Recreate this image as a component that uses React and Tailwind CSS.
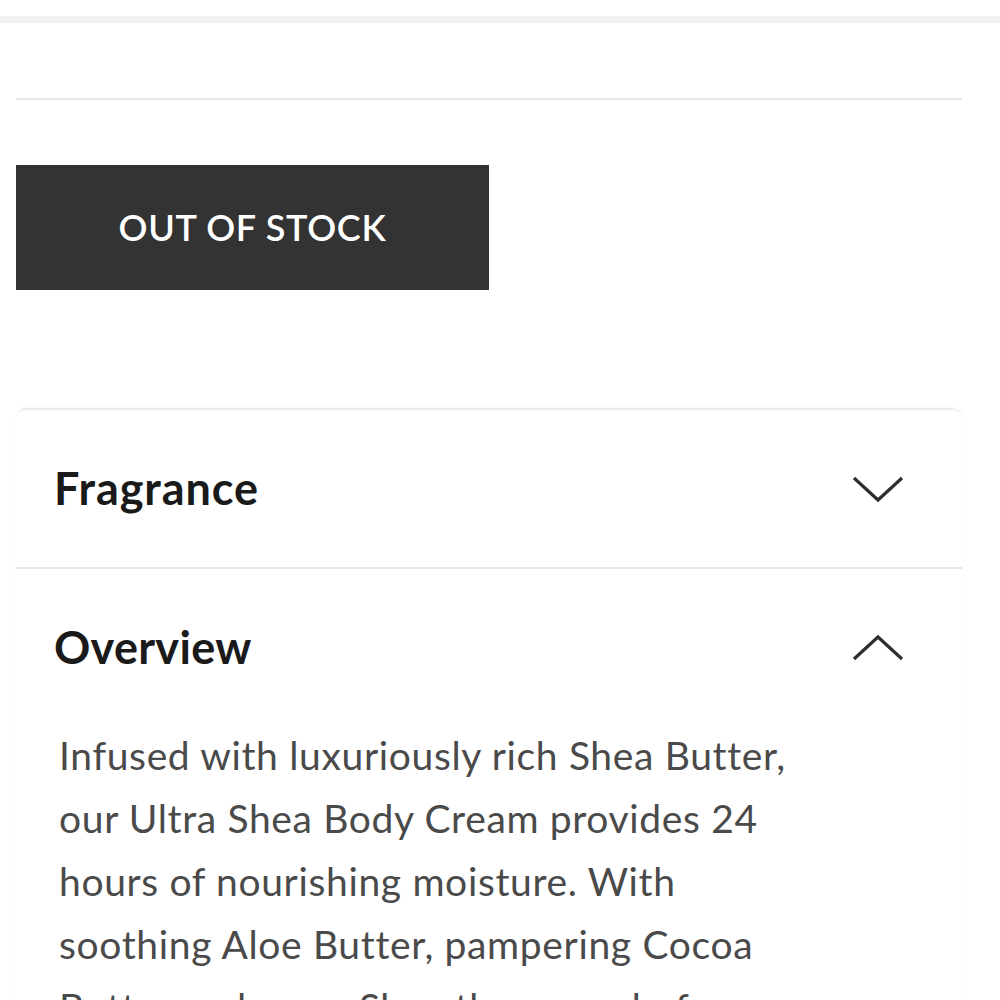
import React from "react";

function Chevron({ up }) {
  return (
    <svg width="52" height="28" viewBox="0 0 52 28" className="shrink-0">
      <polyline
        points={up ? "2,25 26,3 50,25" : "2,3 26,25 50,3"}
        fill="none"
        stroke="#2e2e2e"
        strokeWidth="3.2"
      />
    </svg>
  );
}

export default function App() {
  return (
    <div className="w-[1000px] h-[1000px] overflow-hidden bg-white" style={{ fontFamily: "Lato, 'Noto Sans', sans-serif" }}>
      <div className="h-[16px]" />
      <div className="h-[7px] bg-[#f2f2f2]" />
      <div className="px-[16px] mr-[22px]">
        <div className="mt-[75px] h-[2px] bg-[#e6e6e6]" />
        <div className="mt-[65px] w-[473px] h-[125px] bg-[#333333] flex items-center justify-center pb-[2px] text-white text-[36px] font-semibold tracking-[0.7px]">
          OUT OF STOCK
        </div>
        <div className="mt-[118px] rounded-t-[10px] border-t-2 border-[#ebebeb] shadow-[0_-1px_2px_rgba(0,0,0,0.03)]">
          <div className="h-[157px] flex items-center justify-between pl-[38px] pr-[58px]">
            <span className="text-[45px] font-bold text-[#1a1a1a] tracking-[0.9px]">Fragrance</span>
            <Chevron />
          </div>
          <div className="h-[2px] bg-[#e6e6e6]" />
          <div className="h-[158px] flex items-center justify-between pl-[38px] pr-[58px]">
            <span className="text-[45px] font-bold text-[#1a1a1a] tracking-[0.3px]">Overview</span>
            <Chevron up />
          </div>
          <p className="pl-[43px] -mt-[3px] text-[39px] leading-[63px] tracking-[0.65px] text-[#4a4a4a]">
            Infused with luxuriously rich Shea Butter,
            <br />
            our Ultra Shea Body Cream provides 24
            <br />
            hours of nourishing moisture. With
            <br />
            soothing Aloe Butter, pampering Cocoa
            <br />
            Butter and more Shea than ever before.
          </p>
        </div>
      </div>
    </div>
  );
}
